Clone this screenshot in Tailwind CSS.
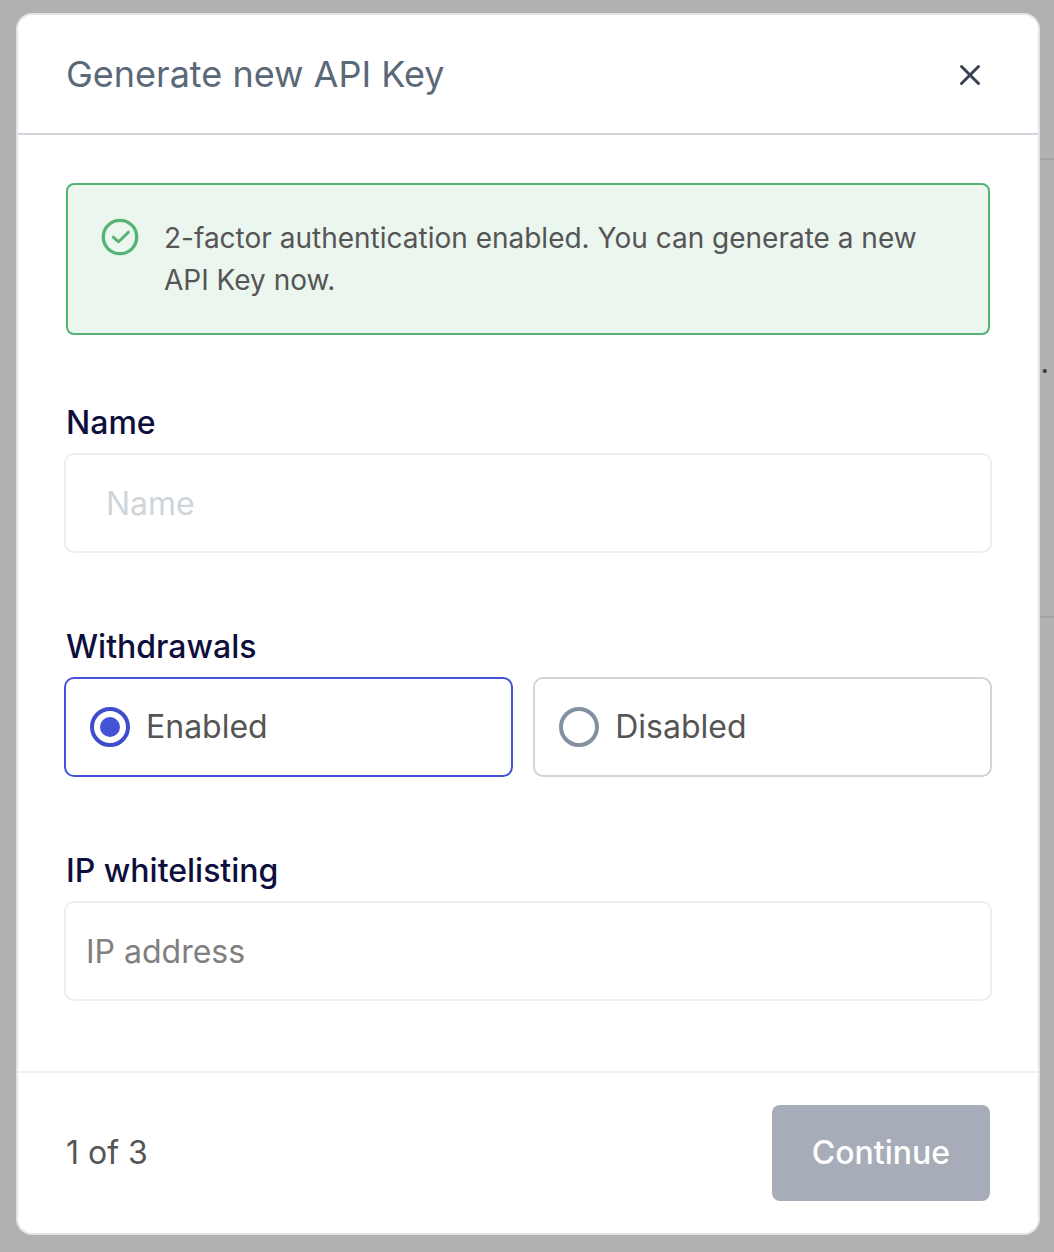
<!DOCTYPE html>
<html lang="en">

<head>
    <meta charset="UTF-8">
    <meta name="viewport" content="width=device-width, initial-scale=1.0">
    <script src="https://cdn.jsdelivr.net/npm/@tailwindcss/browser@4"></script>
    <title>Generate new API Key</title>
</head>

<body class="relative min-h-screen overflow-x-hidden bg-[#b1b1b1] font-['Inter',sans-serif] text-[32px] leading-[48px] text-[#555555]">
    <!-- page behind the dialog -->
    <div class="absolute top-[158px] right-0 left-8 h-[460px] border-y-2 border-[#a3a3aa]">
        <p class="absolute top-[182px] right-[5px] text-[28px] leading-[42px] font-medium text-[#3b3f4a]">.</p>
    </div>

    <main class="relative pt-[13px] pr-[14px] pb-[17px] pl-4">
        <form role="dialog" aria-labelledby="dialog-title" class="rounded-2xl border-2 border-[#e2e2e9] bg-white">
            <header class="flex items-center justify-between border-b-2 border-[#ced5db] px-12 py-8">
                <h1 id="dialog-title" class="text-[36px] leading-[54px] text-[#5a6878]">Generate new API Key</h1>
                <button type="button" aria-label="Close" class="cursor-pointer text-[#364152]">
                    <svg class="size-10" viewBox="0 0 40 40" fill="none" stroke="currentColor" stroke-width="3" stroke-linecap="round">
                        <path d="M11.500 12.500L28.500 29.500M28.500 12.500L11.500 29.500" />
                    </svg>
                </button>
            </header>

            <section class="px-[46px] pt-12">
                <div class="mx-[2px] mb-16 flex gap-6 rounded-lg border-2 border-[#55b374] bg-[#ebf6ef] p-8 text-[28px] leading-[42px]">
                    <svg class="size-10 shrink-0 text-[#55b374]" viewBox="0 0 40 40" fill="none" stroke="currentColor" stroke-width="3" stroke-linecap="round" stroke-linejoin="round">
                        <circle cx="20" cy="20" r="16.700" stroke-width="3.300" />
                        <path d="M13.200 20.200L18.600 24.800L28.400 15.200" />
                    </svg>
                    <p>2-factor authentication enabled. You can generate a new API Key now.</p>
                </div>

                <div class="mb-[70px]">
                    <label for="name" class="mx-[2px] mb-[6px] block font-medium text-[#0e0e3c]">Name</label>
                    <input id="name" name="name" type="text" placeholder="Name" autocomplete="off"
                        class="block h-[100px] w-full rounded-[10px] border-2 border-[#eeeff4] px-10 outline-none placeholder:text-[#ced5db]">
                </div>

                <fieldset class="mb-[70px]">
                    <legend class="mx-[2px] mb-[6px] font-medium text-[#0e0e3c]">Withdrawals</legend>
                    <div class="flex gap-5">
                        <label class="flex h-[100px] flex-auto items-center gap-4 rounded-[10px] border-2 border-[#ced5db] px-6 has-checked:border-[#4453d6]">
                            <input type="radio" name="withdrawals" value="enabled" checked
                                class="size-10 shrink-0 appearance-none rounded-full border-4 border-[#8390a0] bg-clip-content p-[6px] checked:border-[#404dcb] checked:bg-[#4453d6]">
                            Enabled
                        </label>
                        <label class="flex h-[100px] flex-auto items-center gap-4 rounded-[10px] border-2 border-[#ced5db] px-6 has-checked:border-[#4453d6]">
                            <input type="radio" name="withdrawals" value="disabled"
                                class="size-10 shrink-0 appearance-none rounded-full border-4 border-[#8390a0] bg-clip-content p-[6px] checked:border-[#404dcb] checked:bg-[#4453d6]">
                            Disabled
                        </label>
                    </div>
                </fieldset>

                <div class="mb-[70px]">
                    <label for="ip" class="mx-[2px] mb-[6px] block font-medium text-[#0e0e3c]">IP whitelisting</label>
                    <input id="ip" name="ip" type="text" placeholder="IP address" autocomplete="off"
                        class="block h-[100px] w-full rounded-[10px] border-2 border-[#eeeff4] px-5 outline-none placeholder:text-[#808080]">
                </div>
            </section>

            <footer class="flex items-center justify-between border-t-2 border-[#edf0f5] px-12 py-8">
                <p>1 of 3</p>
                <button type="submit" class="h-24 rounded-lg bg-[#a6adb9] px-10 font-medium text-white">Continue</button>
            </footer>
        </form>
    </main>
</body>

</html>
